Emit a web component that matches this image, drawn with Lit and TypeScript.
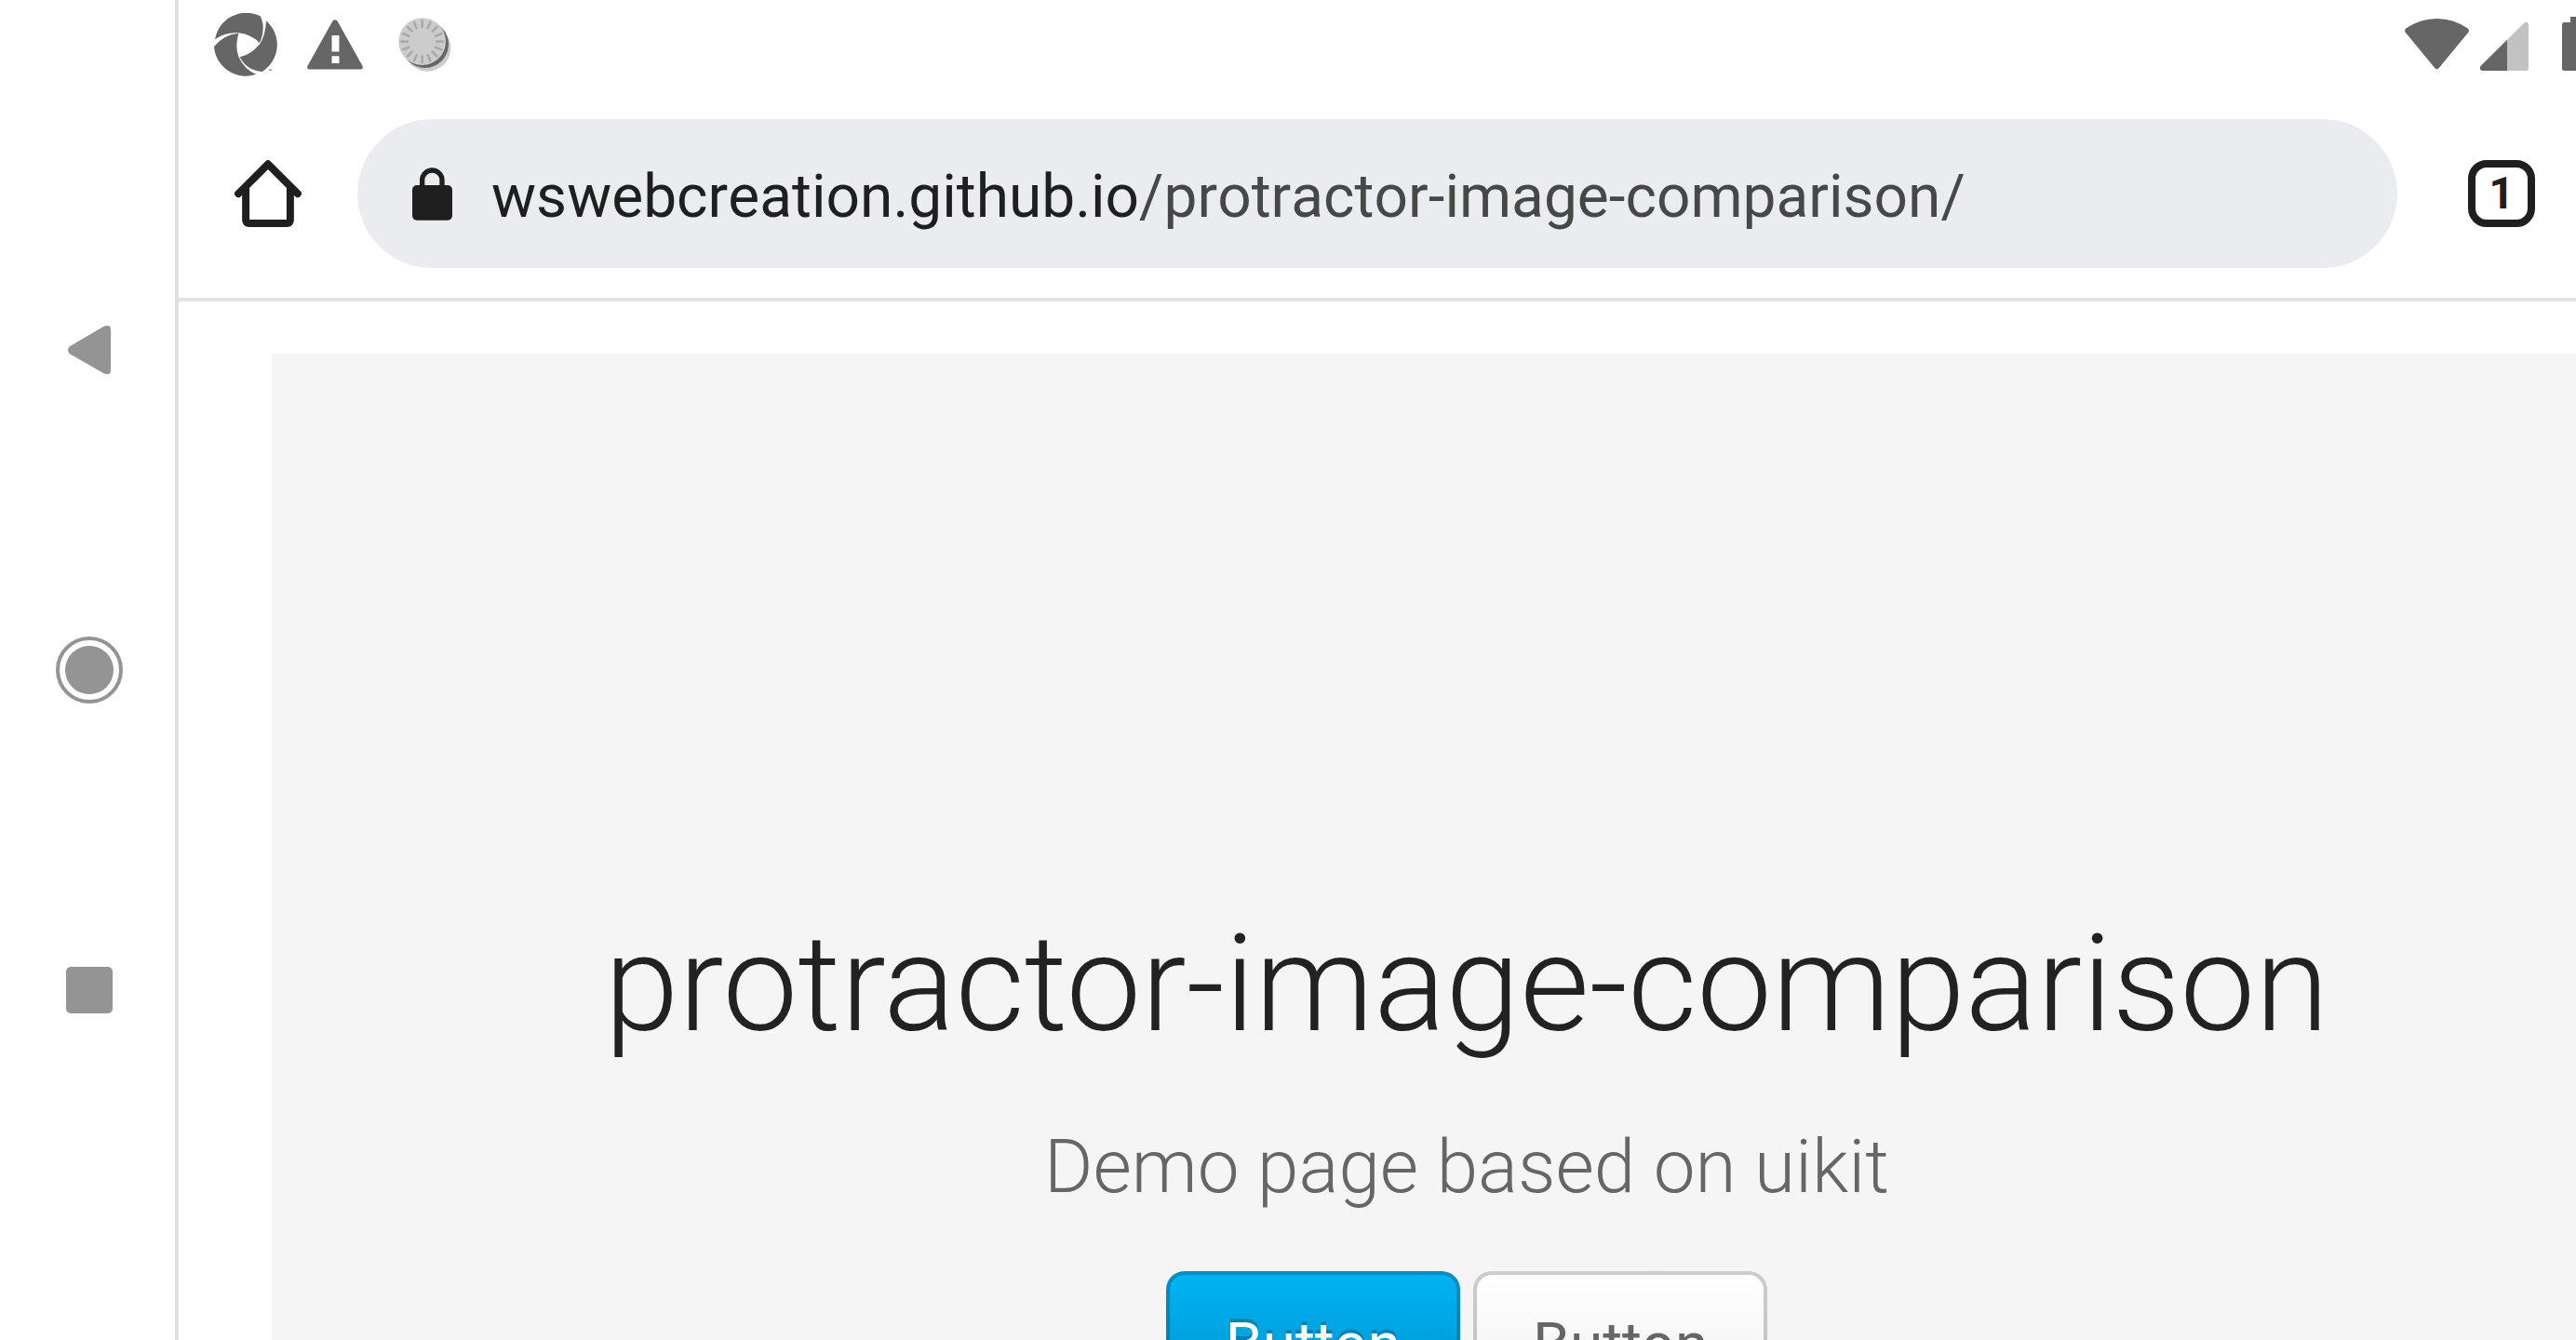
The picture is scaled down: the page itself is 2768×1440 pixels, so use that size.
import { LitElement, html, css, svg } from "lit";
import { customElement, property } from "lit/decorators.js";

const COIN_TICKS = Array.from({ length: 16 }, (_, i) => i * 22.5);

@customElement("nav-rail")
export class NavRail extends LitElement {
  static styles = css`
    :host {
      box-sizing: border-box;
      flex: none;
      width: 192px;
      display: flex;
      flex-direction: column;
      align-items: center;
      justify-content: center;
      gap: 248px;
      border-right: 4px solid #e0e0e0;
      padding-left: 4px;
    }
    .key {
      display: flex;
      align-items: center;
      justify-content: center;
      width: 96px;
      height: 96px;
      padding: 0;
      border: 0;
      background: none;
      color: #949494;
    }
  `;

  render() {
    return html`
      <button class="key" aria-label="Back">
        <svg width="46" height="52" viewBox="219 89 139 157" fill="currentColor">
          <path d="M334 92Q358 82 358 102V233Q358 253 334 243L225 180Q213 168 225 156Z" />
        </svg>
      </button>
      <button class="key" aria-label="Home">
        <svg width="72" height="72" viewBox="0 0 72 72" fill="currentColor">
          <circle cx="36" cy="36" r="26" />
          <circle cx="36" cy="36" r="34" fill="none" stroke="currentColor" stroke-width="4" />
        </svg>
      </button>
      <button class="key" aria-label="Recent apps">
        <svg width="50" height="50" viewBox="0 0 50 50" fill="currentColor">
          <rect width="50" height="50" rx="5" />
        </svg>
      </button>
    `;
  }
}

@customElement("status-bar")
export class StatusBar extends LitElement {
  static styles = css`
    :host {
      box-sizing: border-box;
      display: flex;
      justify-content: space-between;
      height: 96px;
      padding: 0 173px 0 24px;
      color: #666;
    }
    .group {
      display: flex;
    }
    .cell {
      display: flex;
      align-items: center;
      justify-content: center;
      width: 96px;
      height: 96px;
    }
    .system {
      display: flex;
      align-items: flex-end;
      gap: 12px;
      height: 76px;
    }
    .battery {
      margin-left: 24px;
    }
    .tm {
      font: 700 20px Roboto, sans-serif;
    }
  `;

  render() {
    return html`
      <div class="group">
        <span class="cell">
          <svg width="68" height="68" viewBox="150 42 204 204" fill="currentColor" role="img" aria-label="Notification">
            <path d="M153 127A102 102 0 0 1 299 52Q304 60 307 76Q311 108 297 138Q266 109 228 106Q186 103 153 127Z" />
            <path d="M318 67A102 102 0 0 1 305 231Q256 228 233 184Q272 175 298 141Q317 110 318 67Z" />
            <path d="M150 150Q180 112 229 107Q217 150 229 182Q247 224 286 239A102 102 0 0 1 150 150Z" />
            <text class="tm" x="324" y="236">™</text>
          </svg>
        </span>
        <span class="cell">
          <svg width="60" height="54" viewBox="448 60 181 162" role="img" aria-label="Warning">
            <path fill="currentColor" fill-rule="evenodd" d="M531 64Q538 56 546 64L627 209Q632 221 619 221H458Q445 221 450 209ZM528 111V164H552V111ZM528 178V201H552V178Z" />
          </svg>
        </span>
        <span class="cell">
          <svg width="57" height="58" viewBox="743 57 171 174" role="img" aria-label="Sync">
            <circle cx="837" cy="155" r="75" fill="#ccc" />
            <circle cx="829" cy="143" r="76" fill="#666" />
            <circle cx="820" cy="134" r="76" fill="#ccc" />
            ${COIN_TICKS.map(
              (a) => svg`<line x1="820" y1="87" x2="820" y2="67" stroke="#aaa" stroke-width="8"
                stroke-linecap="round" transform="rotate(${a} 820 134)" />`
            )}
          </svg>
        </span>
      </div>
      <div class="system">
        <svg width="69" height="56" viewBox="131 60 207 168" fill="currentColor" role="img" aria-label="Wi-Fi">
          <path d="M136 91Q182 60 234 60Q287 60 333 91Q341 97 336 104L242 218Q234 227 227 218L133 104Q128 97 136 91Z" />
        </svg>
        <svg width="52" height="52" viewBox="375 72 156 156" role="img" aria-label="Signal">
          <path fill="#c2c2c2" d="M462 128L516 74Q531 67 531 80V220Q531 228 523 228H462Z" />
          <path fill="currentColor" d="M462 128V228H383Q370 225 377 212Z" />
        </svg>
        <svg class="battery" width="34" height="58" viewBox="639 57 102 174" fill="currentColor" role="img" aria-label="Battery">
          <path d="M666 57H714V75H734Q741 75 741 82V224Q741 231 734 231H646Q639 231 639 224V82Q639 75 646 75H666Z" />
        </svg>
      </div>
    `;
  }
}

@customElement("browser-bar")
export class BrowserBar extends LitElement {
  @property() url = "";

  static styles = css`
    :host {
      display: flex;
      align-items: center;
      padding: 32px 160px 32px 0;
      border-bottom: 4px solid #e1e2e1;
      color: #1f1f1f;
      font-family: Roboto, sans-serif;
    }
    .action {
      flex: none;
      display: flex;
      align-items: center;
      justify-content: center;
      height: 160px;
      padding: 0;
      border: 0;
      background: none;
      color: inherit;
      font-family: inherit;
    }
    .home {
      width: 192px;
    }
    .tabs {
      width: 224px;
    }
    .count {
      box-sizing: border-box;
      width: 72px;
      height: 72px;
      border: 8px solid currentColor;
      border-radius: 20px;
      font-size: 48px;
      font-weight: 700;
      line-height: 56px;
    }
    .pill {
      flex: 1;
      display: flex;
      align-items: center;
      gap: 16px;
      height: 160px;
      padding: 0 32px;
      box-sizing: border-box;
      border-radius: 80px;
      background: #ebecf0;
    }
    .lock {
      flex: none;
      display: flex;
      justify-content: center;
      width: 96px;
    }
    .address {
      box-sizing: border-box;
      flex: 1;
      min-width: 0;
      height: 96px;
      padding: 6px 0 0;
      border: 0;
      outline: 0;
      font-family: inherit;
      font-size: 64px;
      font-kerning: none;
      color: transparent;
      /* host name in near-black, path in grey */
      background: linear-gradient(to right, #1f1f1f 698px, #474747 698px);
      background-clip: text;
      -webkit-background-clip: text;
    }
  `;

  render() {
    return html`
      <button class="action home" aria-label="Home page">
        <svg width="72" height="72" viewBox="216 185 216 217">
          <path d="M228 294L324 198L420 294" fill="none" stroke="currentColor" stroke-width="24" stroke-linecap="round" stroke-linejoin="round" />
          <path d="M240 276L264 262V378H384V262L408 276V378Q408 402 384 402H264Q240 402 240 378Z" fill="currentColor" />
        </svg>
      </button>
      <div class="pill">
        <span class="lock">
          <svg width="43" height="57" viewBox="788 205 129 171" role="img" aria-label="Secure connection">
            <rect x="788" y="262" width="129" height="113" rx="15" fill="currentColor" />
            <path d="M820 266V246A32 32 0 0 1 884 246V266" fill="none" stroke="currentColor" stroke-width="16" />
          </svg>
        </span>
        <input class="address" type="text" aria-label="Address" spellcheck="false" .value=${this.url} />
      </div>
      <button class="action tabs" aria-label="Open tabs"><span class="count">1</span></button>
    `;
  }
}

@customElement("demo-page")
export class DemoPage extends LitElement {
  static styles = css`
    :host {
      display: block;
      padding: 56px 100px;
      font-family: Roboto, sans-serif;
    }
    .hero {
      padding: 598px 100px;
      background: #f5f5f5;
      text-align: center;
    }
    .title {
      margin: 0 0 60px;
      font-size: 144px;
      font-weight: 300;
      line-height: 160px;
      color: #222;
    }
    .lead {
      margin: 0 0 56px;
      font-size: 80px;
      font-weight: 300;
      line-height: 112px;
      color: #666;
    }
    .actions {
      display: flex;
      justify-content: center;
      gap: 14px;
    }
    .button {
      height: 160px;
      padding: 0 60px;
      border: 4px solid rgba(0, 0, 0, 0.2);
      border-bottom-color: rgba(0, 0, 0, 0.3);
      border-radius: 20px;
      font: 400 64px/152px Roboto, sans-serif;
      color: #666;
      background: linear-gradient(to bottom, #fff, #eee) border-box;
      text-shadow: 0 4px 0 #fff;
    }
    .primary {
      color: #fff;
      background: linear-gradient(to bottom, #00b4f5, #008dc5) border-box;
      text-shadow: 0 -4px 0 rgba(0, 0, 0, 0.2);
    }
  `;

  render() {
    return html`
      <section class="hero">
        <h1 class="title">protractor-image-comparison</h1>
        <p class="lead">Demo page based on uikit</p>
        <div class="actions">
          <button class="button primary">Button</button>
          <button class="button">Button</button>
        </div>
      </section>
    `;
  }
}

@customElement("app-root")
export class AppRoot extends LitElement {
  static styles = css`
    :host {
      display: flex;
      height: 100vh;
      overflow: hidden;
      background: #fff;
    }
    /* The browser is as wide as the window and runs off its right side, past the navigation rail. */
    .browser {
      flex: 0 0 100vw;
    }
  `;

  render() {
    return html`
      <nav-rail></nav-rail>
      <main class="browser">
        <status-bar></status-bar>
        <browser-bar url="wswebcreation.github.io/protractor-image-comparison/"></browser-bar>
        <demo-page></demo-page>
      </main>
    `;
  }
}
